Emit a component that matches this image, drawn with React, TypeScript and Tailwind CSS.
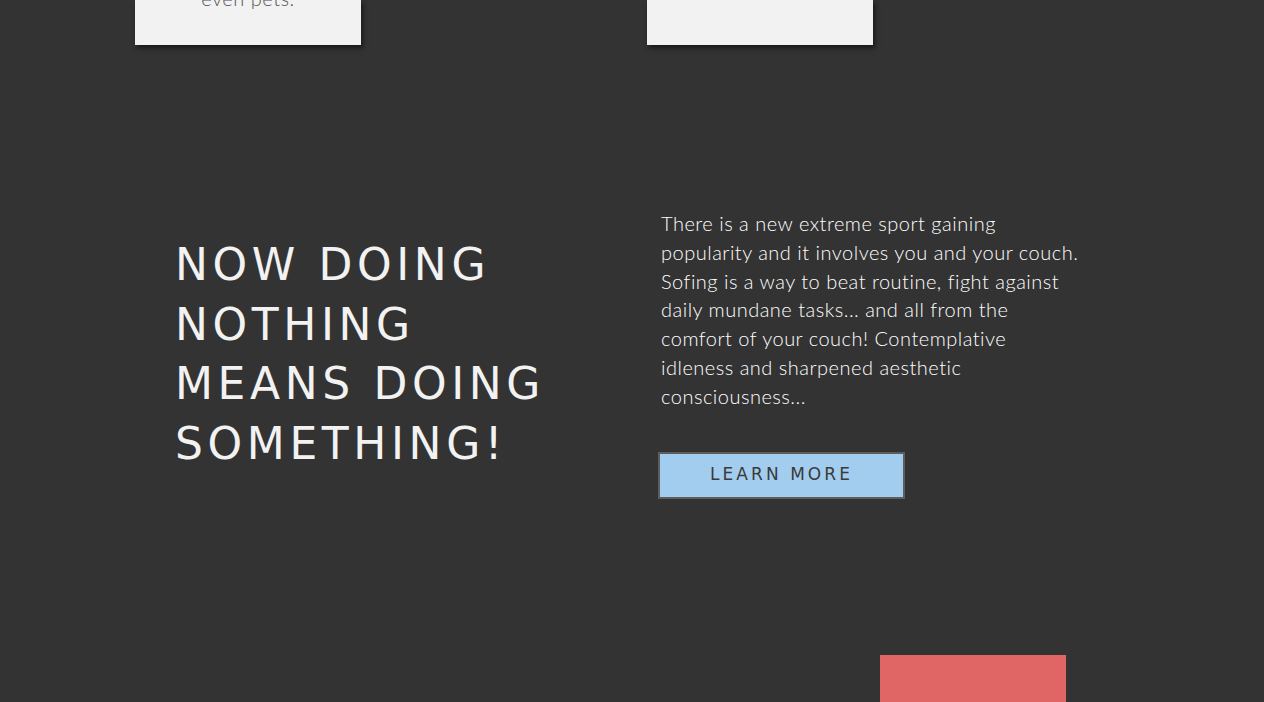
export default function App() {
  return (
    <div className="h-[702px] w-full overflow-hidden bg-[#333333]" style={{ fontFamily: 'Lato, sans-serif' }}>
      <div className="flex h-[45px] items-end">
        <div className="ml-[135px] flex h-[45px] w-[226px] justify-center bg-[#f2f2f2] shadow-[2px_3px_5px_rgba(0,0,0,0.55)]">
          <p className="-mt-[17px] text-[20px] font-light tracking-[0.025em] text-[#555555]">even pets.</p>
        </div>
        <div className="ml-[286px] h-[45px] w-[226px] bg-[#f2f2f2] shadow-[2px_3px_5px_rgba(0,0,0,0.55)]" />
      </div>

      <div className="mt-[163px] flex h-[402px]">
        <div className="ml-[175px] w-[440px] pt-[27px]">
          <h2
            className="w-[400px] text-[44px] leading-[59.5px] tracking-[0.105em] text-[#f2f2f2]"
            style={{ fontFamily: '"DejaVu Sans", sans-serif' }}
          >
            NOW DOING NOTHING MEANS DOING SOMETHING!
          </h2>
        </div>
        <div className="ml-[46px] w-[430px]">
          <p className="w-[418px] pt-[1px] text-[20px] leading-[28.8px] font-light tracking-[0.025em] text-white">
            There is a new extreme sport gaining popularity and it involves you and your couch. Sofing is a way to beat
            routine, fight against daily mundane tasks... and all from the comfort of your couch! Contemplative idleness
            and sharpened aesthetic consciousness...
          </p>
          <button
            className="mt-[41px] -ml-[3px] box-border flex h-[47px] w-[247px] items-center justify-center border-2 border-[#5d5d5d] bg-[#a3cdef] text-[17px] tracking-[0.18em] text-[#3a3a3a]"
            style={{ fontFamily: '"DejaVu Sans", sans-serif' }}
          >
            LEARN MORE
          </button>
        </div>
      </div>

      <div className="mt-[45px] ml-[880px] h-[60px] w-[186px] bg-[#e06666]" />
    </div>
  )
}
